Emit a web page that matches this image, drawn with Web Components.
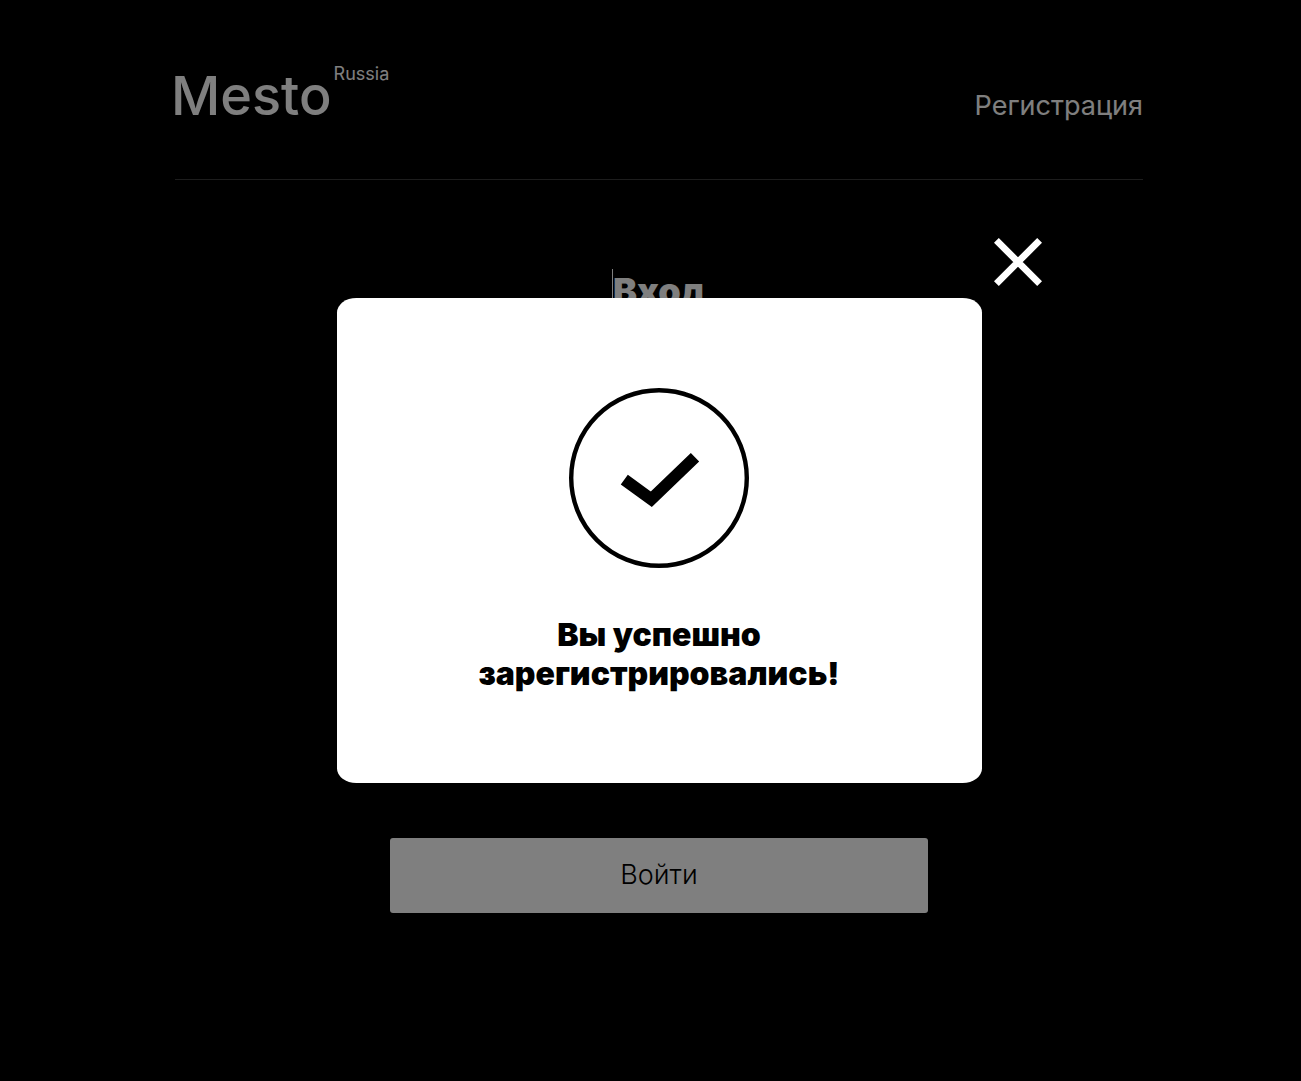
<!DOCTYPE html>
<html lang="ru">
<head>
<meta charset="utf-8">
<meta name="viewport" content="width=device-width, initial-scale=1">
<title>Mesto Russia</title>
<style>
  body { margin: 0; background: #000; color: #fff; font-family: Inter, "Liberation Sans", sans-serif; }
</style>
</head>
<body>
<mesto-page></mesto-page>

<template id="mesto-logo">
  <style>
    :host { display: flex; align-items: flex-start; gap: 2px; margin-left: -4px; }
    .name { font-size: 54px; line-height: 60px; font-weight: 500; }
    .region { font-size: 18px; line-height: 16px; }
  </style>
  <span class="name"><slot></slot></span>
  <span class="region"><slot name="region"></slot></span>
</template>

<template id="mesto-header">
  <style>
    :host { display: flex; justify-content: space-between; align-items: flex-end; padding: 66px 0 53px; border-bottom: 1px solid rgba(84, 84, 84, .7); }
    a { color: inherit; text-decoration: none; font-size: 27px; line-height: 34px; padding-bottom: 3px; }
  </style>
  <mesto-logo>Mesto<span slot="region">Russia</span></mesto-logo>
  <a href="#signup">Регистрация</a>
</template>

<template id="mesto-login">
  <style>
    :host { display: block; width: 100%; max-width: 538px; margin: 0 auto; padding: 89px 0 60px; }
    form { display: flex; flex-direction: column; gap: 30px; }
    h1 { margin: 0 auto 48px; border-left: 1px solid #fff; font-size: 36px; line-height: 44px; font-weight: 900; }
    input { box-sizing: border-box; height: 60px; padding: 0; background: none; border: 0; border-bottom: 2px solid #ccc; color: inherit; font: inherit; font-size: 27px; }
    button { margin-top: 267px; height: 75px; padding: 0 0 2px; border: 0; border-radius: 3px; background: #fff; color: #000; font: inherit; font-size: 27px; font-weight: 300; }
  </style>
  <form>
    <h1>Вход</h1>
    <input type="email" aria-label="Email">
    <input type="password" aria-label="Пароль">
    <button type="submit">Войти</button>
  </form>
</template>

<template id="mesto-popup">
  <style>
    :host { position: fixed; inset: 0; box-sizing: border-box; padding-left: 17px; display: flex; align-items: center; justify-content: center; background: rgba(0, 0, 0, .5); }
    section { position: relative; box-sizing: border-box; width: 645px; max-width: 80%; padding: 90px 100px; border-radius: 3%; background: #fff; color: #000; display: flex; flex-direction: column; align-items: center; gap: 47px; }
    h2 { margin: 0; max-width: 400px; text-align: center; font-size: 32px; line-height: 39px; font-weight: 900; }
    .close { position: absolute; top: -60px; right: -60px; width: 48px; height: 48px; padding: 0; border: 0; background: none; cursor: pointer; }
    svg { display: block; }
  </style>
  <section role="dialog" aria-modal="true" aria-labelledby="message">
    <button class="close" type="button" aria-label="Закрыть">
      <svg width="48" height="48" viewBox="0 0 48 48" fill="none" stroke="#fff" stroke-width="6.8"><path d="M2.4 2.4 45.6 45.6M45.6 2.4 2.4 45.6"/></svg>
    </button>
    <svg width="180" height="180" viewBox="0 0 180 180" fill="none" stroke="#000" aria-hidden="true"><circle cx="90" cy="90" r="87.8" stroke-width="4.4"/><path d="M55.3 91.6 82.3 111.3 126 69.2" stroke-width="12"/></svg>
    <h2 id="message"><slot></slot></h2>
  </section>
</template>

<template id="mesto-page">
  <style>
    :host { display: block; min-height: 100vh; box-sizing: border-box; padding-left: 17px; }
    .content { width: calc(100% - 40px); max-width: 968px; margin: 0 auto; }
  </style>
  <div class="content">
    <mesto-header></mesto-header>
    <main><mesto-login></mesto-login></main>
  </div>
  <mesto-popup>Вы успешно зарегистрировались!</mesto-popup>
</template>

<script>
  class TemplateElement extends HTMLElement {
    constructor() {
      super();
      const template = document.getElementById(this.localName);
      this.attachShadow({ mode: "open" }).append(template.content.cloneNode(true));
    }
  }
  class MestoLogo extends TemplateElement {}
  class MestoHeader extends TemplateElement {}
  class MestoLogin extends TemplateElement {
    connectedCallback() {
      this.shadowRoot.querySelector("form").addEventListener("submit", e => e.preventDefault());
    }
  }
  class MestoPopup extends TemplateElement {
    connectedCallback() {
      this.shadowRoot.querySelector(".close").addEventListener("click", () => this.remove());
    }
  }
  class MestoPage extends TemplateElement {}
  customElements.define("mesto-logo", MestoLogo);
  customElements.define("mesto-header", MestoHeader);
  customElements.define("mesto-login", MestoLogin);
  customElements.define("mesto-popup", MestoPopup);
  customElements.define("mesto-page", MestoPage);
</script>
</body>
</html>
